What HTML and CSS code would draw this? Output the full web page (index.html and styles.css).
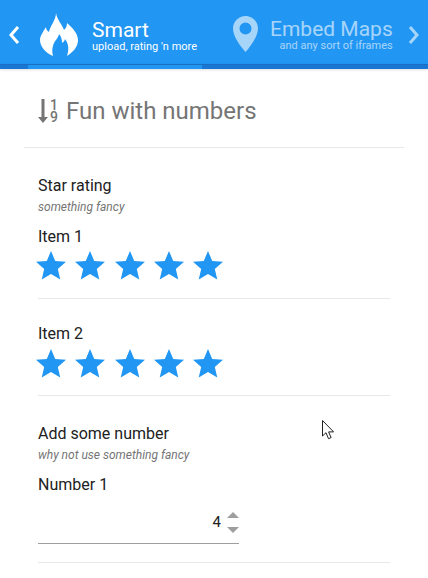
FILE: index.html
```html
<!DOCTYPE html>
<html lang="en">

<head>
    <meta charset="UTF-8" />
    <title>Smart</title>
    <link rel="stylesheet" href="styles.css">
</head>

<body>
    <div class="tabs">
        <div class="tab_arrow">
            <svg width="12" height="20" viewBox="0 0 12 20"><path d="M10 2 3 10l7 8" /></svg>
        </div>
        <div class="tab tab_active">
            <svg class="tab_icon" width="50" height="52" viewBox="0 0 50 52">
                <path d="M21 5C22 12 27 16 29 22 31 20 32 18 32 15 38 20 43 26 43 32 43 39 38 44 32 48 34 42 34 36 30 31 30 33 28 34 27 35 27 31 26 28 24 26 23 31 19 33 18 38 17 41 17 44 18 48 11 45 5 39 5 32 5 28 8 24 11 19 11 21 12 23 14 24 15 18 21 12 21 5Z" />
            </svg>
            <div class="tab_text">
                <div class="tab_title">Smart</div>
                <div class="tab_sub">upload, rating 'n more</div>
            </div>
        </div>
        <div class="tab tab_next">
            <svg class="tab_icon" width="25" height="36" viewBox="0 0 25 36">
                <path fill-rule="evenodd" d="M12.5 0C5.6 0 0 5.6 0 12.5 0 20 7 30 12.5 36 18 30 25 20 25 12.5 25 5.6 19.4 0 12.5 0ZM12.5 6.500a6 6 0 1 1 0 12 6 6 0 0 1 0-12Z" />
            </svg>
            <div class="tab_text tab_text_right">
                <div class="tab_title">Embed Maps</div>
                <div class="tab_sub">and any sort of iframes</div>
            </div>
        </div>
        <div class="tab_arrow tab_arrow_next">
            <svg width="12" height="20" viewBox="0 0 12 20"><path d="M2 2l7 8-7 8" /></svg>
        </div>
    </div>
    <div class="strip">
        <div class="strip_active"></div>
    </div>

    <div class="page_head">
        <div class="sort_icon">
            <svg width="10" height="24" viewBox="0 0 10 24"><path d="M3.500 0h3v18H10l-5 6-5-6h3.500z" /></svg>
            <div class="sort_digits"><span>1</span><span>9</span></div>
        </div>
        <h1>Fun with numbers</h1>
    </div>

    <div class="content">
        <div class="group_head">
            <div class="group_title">Star rating</div>
            <div class="group_sub">something fancy</div>
        </div>
        <div class="field field_stars">
            <div class="field_label">Item 1</div>
            <div class="stars">
                <svg viewBox="0 0 24 24"><path d="M12 17.270 18.180 21l-1.640-7.030L22 9.240l-7.190-.61L12 2 9.190 8.630 2 9.240l5.460 4.730L5.820 21z" /></svg>
                <svg viewBox="0 0 24 24"><path d="M12 17.270 18.180 21l-1.640-7.030L22 9.240l-7.190-.61L12 2 9.190 8.630 2 9.240l5.460 4.730L5.820 21z" /></svg>
                <svg viewBox="0 0 24 24"><path d="M12 17.270 18.180 21l-1.640-7.030L22 9.240l-7.190-.61L12 2 9.190 8.630 2 9.240l5.460 4.730L5.820 21z" /></svg>
                <svg viewBox="0 0 24 24"><path d="M12 17.270 18.180 21l-1.640-7.030L22 9.240l-7.190-.61L12 2 9.190 8.630 2 9.240l5.460 4.730L5.820 21z" /></svg>
                <svg viewBox="0 0 24 24"><path d="M12 17.270 18.180 21l-1.640-7.030L22 9.240l-7.190-.61L12 2 9.190 8.630 2 9.240l5.460 4.730L5.820 21z" /></svg>
            </div>
        </div>
        <div class="field field_second">
            <div class="field_label">Item 2</div>
            <div class="stars">
                <svg viewBox="0 0 24 24"><path d="M12 17.270 18.180 21l-1.640-7.030L22 9.240l-7.190-.61L12 2 9.190 8.630 2 9.240l5.460 4.730L5.820 21z" /></svg>
                <svg viewBox="0 0 24 24"><path d="M12 17.270 18.180 21l-1.640-7.030L22 9.240l-7.190-.61L12 2 9.190 8.630 2 9.240l5.460 4.730L5.820 21z" /></svg>
                <svg viewBox="0 0 24 24"><path d="M12 17.270 18.180 21l-1.640-7.030L22 9.240l-7.190-.61L12 2 9.190 8.630 2 9.240l5.460 4.730L5.820 21z" /></svg>
                <svg viewBox="0 0 24 24"><path d="M12 17.270 18.180 21l-1.640-7.030L22 9.240l-7.190-.61L12 2 9.190 8.630 2 9.240l5.460 4.730L5.820 21z" /></svg>
                <svg viewBox="0 0 24 24"><path d="M12 17.270 18.180 21l-1.640-7.030L22 9.240l-7.190-.61L12 2 9.190 8.630 2 9.240l5.460 4.730L5.820 21z" /></svg>
            </div>
        </div>
        <div class="group_head group_number">
            <div class="group_title">Add some number</div>
            <div class="group_sub">why not use something fancy</div>
        </div>
        <div class="field field_number">
            <div class="field_label">Number 1</div>
            <div class="number_input">
                <span class="number_value">4</span>
                <div class="spinner">
                    <i class="spin_up"></i>
                    <i class="spin_down"></i>
                </div>
            </div>
        </div>
    </div>

    <svg class="cursor" width="13" height="21" viewBox="0 0 13 21">
        <path d="M.5.500v15.500l3.500-3.300 2.500 6 2.600-1.100-2.500-5.700h5z" />
    </svg>
</body>

</html>
```

FILE: styles.css
```css
html, body {
    margin: 0;
    height: 100%;
    overflow: hidden;
}

body {
    position: relative;
    background: #fff;
    font-family: Roboto, "Liberation Sans", sans-serif;
    color: #212121;
}

.tabs {
    display: flex;
    height: 64px;
    background: #2196f3;
    color: #fff;
}

.tab_arrow {
    width: 28px;
    flex: none;
    display: flex;
    align-items: center;
    padding: 6px 0 0 8px;
    box-sizing: border-box;
}

.tab_arrow svg {
    fill: none;
    stroke: #fff;
    stroke-width: 3;
}

.tab_arrow_next {
    width: 28px;
    padding-left: 8px;
    opacity: 0.6;
}

.tab {
    display: flex;
    align-items: center;
    box-sizing: border-box;
}

.tab_active {
    width: 174px;
    padding-left: 7px;
}

.tab_active .tab_icon {
    margin-top: 4px;
    flex: none;
    fill: #fff;
}

.tab_active .tab_text {
    margin-left: 7px;
    padding-top: 8px;
}

.tab_next {
    width: 198px;
    padding-left: 31px;
    opacity: 0.6;
}

.tab_next .tab_icon {
    flex: none;
    margin-top: 4px;
    fill: #fff;
}

.tab_next .tab_text {
    margin-left: 12px;
    padding-top: 6px;
}

.tab_text {
    white-space: nowrap;
}

.tab_text_right {
    text-align: right;
}

.tab_title {
    font-size: 21px;
    line-height: 21px;
}

.tab_sub {
    font-size: 11px;
    line-height: 11px;
}

.strip {
    height: 4px;
    border-top: 1px solid #1b6fc0;
    background: #1976d2;
    padding-left: 28px;
    box-shadow: 0 1px 3px rgba(0, 0, 0, 0.12);
}

.strip_active {
    width: 174px;
    height: 4px;
    background: #2196f3;
}

.page_head {
    display: flex;
    align-items: center;
    height: 72px;
    margin: 0 24px;
    padding: 6px 0 0 14px;
    border-bottom: 1px solid #e8e8e8;
    color: #757575;
}

.page_head h1 {
    margin: 0 0 0 8px;
    font-size: 24px;
    font-weight: 400;
}

.sort_icon {
    display: flex;
    align-items: center;
    fill: #757575;
}

.sort_digits {
    display: flex;
    flex-direction: column;
    margin-left: 2px;
    font-size: 14px;
    font-weight: 500;
    line-height: 12px;
}

.content {
    width: 352px;
    margin-left: 38px;
}

.group_head {
    padding-top: 28px;
}

.group_title {
    font-size: 16px;
    line-height: 20px;
}

.group_sub {
    font-size: 12px;
    font-style: italic;
    line-height: 16px;
    margin-top: 3px;
    color: #757575;
}

.field {
    border-bottom: 1px solid #e8e8e8;
}

.field_stars {
    padding-top: 12px;
    height: 71px;
}

.field_second {
    padding-top: 25px;
    height: 71px;
}

.field_second .stars {
    margin-top: 2px;
}

.field_label {
    font-size: 16px;
    line-height: 20px;
}

.stars {
    display: flex;
    gap: 3.300px;
    margin: 1px 0 0 -5px;
}

.stars svg {
    width: 36px;
    height: 36px;
    fill: #2196f3;
}

.field_number {
    padding-top: 12px;
    height: 87px;
}

.number_input {
    display: flex;
    justify-content: flex-end;
    align-items: center;
    width: 201px;
    height: 41px;
    margin-top: 3px;
    padding-top: 4px;
    border-bottom: 1px solid #9e9e9e;
    font-size: 15px;
}

.number_value {
    margin-bottom: 2px;
}

.spinner {
    display: flex;
    flex-direction: column;
    gap: 9px;
    margin-left: 6px;
}

.spin_up {
    border: 6px solid transparent;
    border-top: 0;
    border-bottom: 6px solid #9e9e9e;
}

.spin_down {
    border: 6px solid transparent;
    border-bottom: 0;
    border-top: 6px solid #9e9e9e;
}

.cursor {
    position: absolute;
    left: 322px;
    top: 420px;
    fill: #fff;
    stroke: #222;
    stroke-width: 1;
}
```
